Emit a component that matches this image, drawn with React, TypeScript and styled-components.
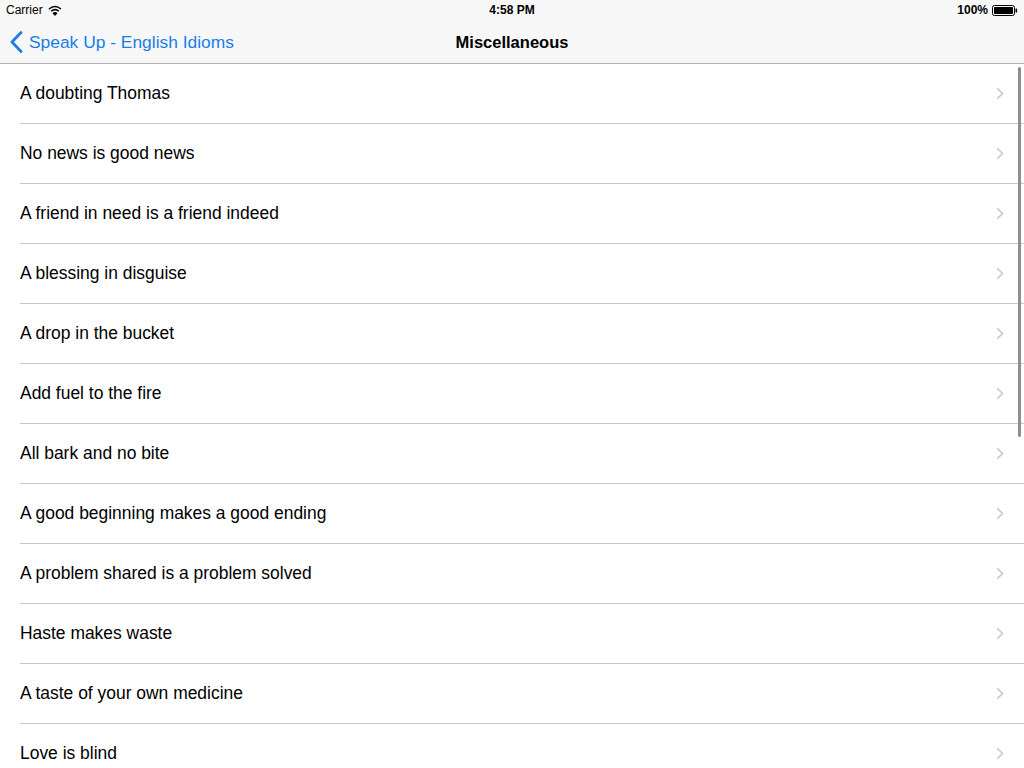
import React from "react";
import styled, { createGlobalStyle } from "styled-components";

const Global = createGlobalStyle`
  html, body { margin: 0; padding: 0; background: #ffffff; }
  body { font-family: "Liberation Sans", Arial, sans-serif; -webkit-font-smoothing: antialiased; }
  * { box-sizing: border-box; }
`;

const Screen = styled.div`
  width: 1024px;
  height: 768px;
  overflow: hidden;
  position: relative;
  background: #ffffff;
  display: flex;
  flex-direction: column;
`;

const TopBars = styled.div`
  background: #f7f7f8;
  border-bottom: 1px solid #b2b2b2;
  flex: none;
`;

const StatusBar = styled.div`
  height: 20px;
  display: grid;
  grid-template-columns: 1fr auto 1fr;
  align-items: center;
  padding: 0 6px;
  font-size: 12px;
  color: #000;
`;

const StatusLeft = styled.div`
  display: flex;
  align-items: center;
  gap: 5px;
`;

const StatusCenter = styled.div`
  font-weight: 700;
  font-size: 12px;
  text-align: center;
`;

const StatusRight = styled.div`
  display: flex;
  align-items: center;
  justify-content: flex-end;
  gap: 4px;
  font-weight: 700;
`;

const NavBar = styled.div`
  height: 43px;
  display: grid;
  grid-template-columns: 1fr auto 1fr;
  align-items: center;
  padding: 0 10px;
`;

const BackButton = styled.div`
  display: flex;
  align-items: center;
  gap: 6px;
  color: #1a7ee6;
  font-size: 17.4px;
  margin-top: 1px;
`;

const Title = styled.div`
  font-size: 16.5px;
  font-weight: 700;
  color: #000;
  text-align: center;
  margin-top: 1px;
`;

const List = styled.div`
  flex: 1;
  display: flex;
  flex-direction: column;
`;

const Row = styled.div`
  height: 60px;
  flex: none;
  margin-left: 20px;
  padding-right: 20px;
  display: flex;
  align-items: center;
  justify-content: space-between;
  border-bottom: 1px solid #c8c7cc;
  font-size: 17.45px;
  color: #000;
`;

const RowLabel = styled.span`
  padding-top: 0px;
`;

const ScrollIndicator = styled.div`
  position: absolute;
  right: 3px;
  top: 67px;
  width: 3px;
  height: 370px;
  border-radius: 2px;
  background: #8e8e8e;
`;

const idioms = [
  "A doubting Thomas",
  "No news is good news",
  "A friend in need is a friend indeed",
  "A blessing in disguise",
  "A drop in the bucket",
  "Add fuel to the fire",
  "All bark and no bite",
  "A good beginning makes a good ending",
  "A problem shared is a problem solved",
  "Haste makes waste",
  "A taste of your own medicine",
  "Love is blind",
];

const Chevron = () => (
  <svg width="8" height="13" viewBox="0 0 8 13">
    <path d="M1.2 1.2 L6.5 6.5 L1.2 11.8" fill="none" stroke="#c7c7cc" strokeWidth="1.6" />
  </svg>
);

const Wifi = () => (
  <svg width="14" height="11" viewBox="0 0 14 11">
    <path d="M1 4 Q7 -1 13 4" fill="none" stroke="#000" strokeWidth="1.6" />
    <path d="M3.2 6.2 Q7 3 10.8 6.2" fill="none" stroke="#000" strokeWidth="1.6" />
    <path d="M5.3 8.3 Q7 7 8.7 8.3 L7 10 Z" fill="#000" stroke="#000" strokeWidth="1.2" strokeLinejoin="round" />
  </svg>
);

const Battery = () => (
  <svg width="26" height="11" viewBox="0 0 26 11">
    <rect x="0.5" y="0.5" width="22" height="10" rx="2" fill="none" stroke="#000" strokeWidth="1" />
    <rect x="2" y="2" width="19" height="7" rx="0.8" fill="#000" />
    <rect x="23.5" y="3.5" width="1.6" height="4" rx="0.6" fill="#000" />
  </svg>
);

const BackChevron = () => (
  <svg width="13" height="22" viewBox="0 0 13 22">
    <path d="M11 1.5 L2 11 L11 20.5" fill="none" stroke="#1a7ee6" strokeWidth="2.8" strokeLinecap="round" strokeLinejoin="round" />
  </svg>
);

export default function App() {
  return (
    <Screen>
      <Global />
      <TopBars>
        <StatusBar>
          <StatusLeft>
            <span>Carrier</span>
            <Wifi />
          </StatusLeft>
          <StatusCenter>4:58 PM</StatusCenter>
          <StatusRight>
            <span>100%</span>
            <Battery />
          </StatusRight>
        </StatusBar>
        <NavBar>
          <BackButton>
            <BackChevron />
            <span>Speak Up - English Idioms</span>
          </BackButton>
          <Title>Miscellaneous</Title>
          <div />
        </NavBar>
      </TopBars>
      <List>
        {idioms.map((t) => (
          <Row key={t}>
            <RowLabel>{t}</RowLabel>
            <Chevron />
          </Row>
        ))}
      </List>
      <ScrollIndicator />
    </Screen>
  );
}
